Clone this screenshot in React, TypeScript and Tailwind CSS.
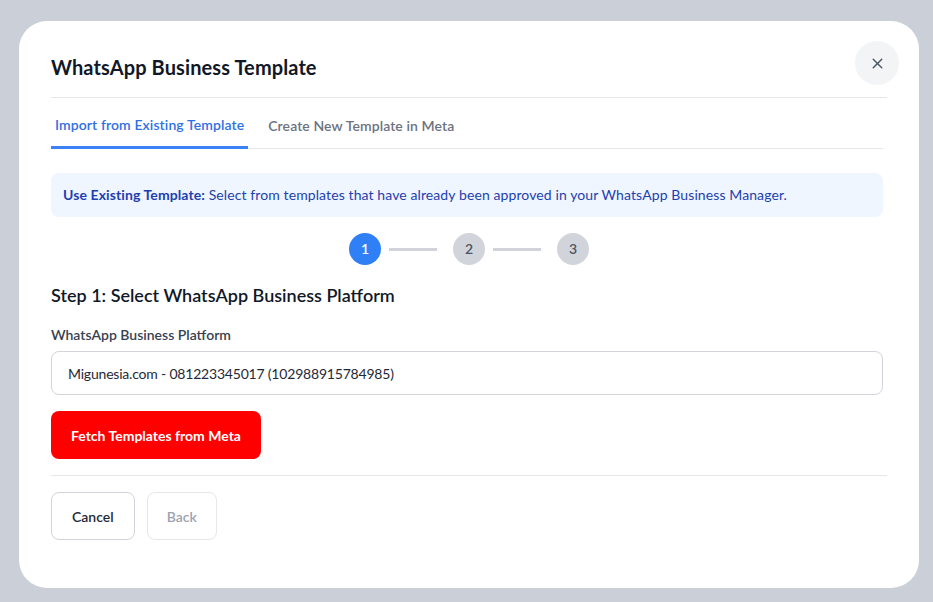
import { X } from 'lucide-react';

const STEPS = [1, 2, 3];

function Stepper({ current }: { current: number }) {
  return (
    <div className="flex items-center justify-center pl-1 mt-4">
      {STEPS.map((step, i) => (
        <div key={step} className="flex items-center">
          <div
            className={`w-8 h-8 rounded-full flex items-center justify-center text-sm font-semibold ${
              step === current ? 'bg-[#2f80f6] text-white' : 'bg-[#d1d5db] text-[#4b5563]'
            }`}
          >
            {step}
          </div>
          {i < STEPS.length - 1 && <div className="w-12 h-[3px] bg-[#d1d5db] ml-2 mr-4" />}
        </div>
      ))}
    </div>
  );
}

export default function App() {
  return (
    <div
      className="w-[933px] h-[602px] bg-[#cbd0d8] pt-[21px] pl-[19px] overflow-hidden"
      style={{ fontFamily: 'Lato, "Open Sans", sans-serif' }}
    >
      <div className="relative w-[900px] h-[567px] bg-white rounded-[28px]">
        <button
          type="button"
          className="absolute top-5 right-5 w-11 h-11 rounded-full bg-[#f3f4f6] flex items-center justify-center text-[#4b5563]"
          aria-label="Close"
        >
          <X size={17} strokeWidth={2} />
        </button>

        <div className="px-8 pt-8">
          <div className="pb-4 border-b border-[#e5e7eb]">
            <h2 className="text-[20px] leading-7 font-bold text-[#111827] tracking-[0.1px]">WhatsApp Business Template</h2>
          </div>
        </div>

        <div className="pl-8 pr-9">
          <div className="flex gap-4 border-b border-[#e5e7eb] mt-[7px]">
            <button
              type="button"
              className="px-1 pt-2.5 pb-[11px] text-[14px] leading-5 font-semibold text-[#2f6fe6] border-b-[3px] border-[#3b82f6] -mb-px tracking-[0.1px]"
            >
              Import from Existing Template
            </button>
            <button
              type="button"
              className="px-1 pt-2.5 pb-[11px] text-[14px] leading-5 font-semibold text-[#6b7280] tracking-[0.1px]"
            >
              Create New Template in Meta
            </button>
          </div>

          <div className="mt-6 bg-[#eff6ff] rounded-lg px-3 py-3 text-[14px] leading-5 text-[#1e40af] tracking-[0.1px]">
            <span className="font-bold">Use Existing Template:</span> Select from templates that have already been
            approved in your WhatsApp Business Manager.
          </div>

          <Stepper current={1} />

          <h3 className="mt-4 text-[18px] leading-7 font-semibold text-[#111827]">
            Step 1: Select WhatsApp Business Platform
          </h3>

          <label className="block mt-4 mb-1.5 text-[14px] leading-5 font-semibold text-[#374151]">
            WhatsApp Business Platform
          </label>
          <div className="h-11 flex items-center px-4 border border-[#d1d5db] rounded-lg text-[14px] text-[#1f2937] tracking-[-0.2px]">
            Migunesia.com - 081223345017 (102988915784985)
          </div>

          <button
            type="button"
            className="mt-4 h-12 px-5 rounded-lg bg-[#ff0000] text-white text-[14px] font-bold"
          >
            Fetch Templates from Meta
          </button>
        </div>

        <div className="px-8">
          <div className="mt-4 pt-4 border-t border-[#e5e7eb] flex gap-3">
            <button
              type="button"
              className="h-12 px-5 rounded-lg border border-[#d1d5db] text-[14px] font-semibold text-[#1f2937]"
            >
              Cancel
            </button>
            <button
              type="button"
              className="h-12 px-[19px] rounded-lg border border-[#e5e7eb] text-[14px] font-semibold text-[#9ca3af]"
            >
              Back
            </button>
          </div>
        </div>
      </div>
    </div>
  );
}
